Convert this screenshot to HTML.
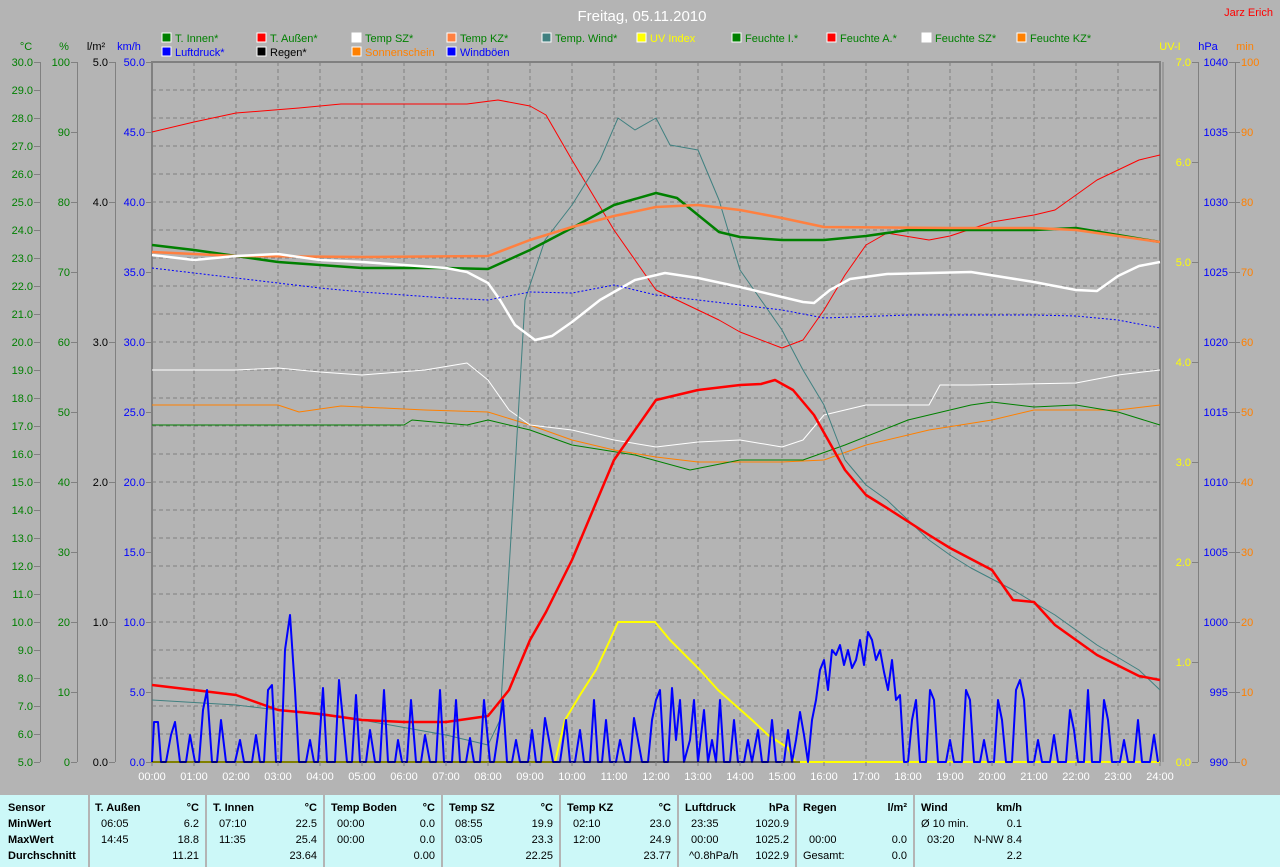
<!DOCTYPE html>
<html><head><meta charset="utf-8"><style>
body{margin:0;width:1280px;height:867px;overflow:hidden;background:#b4b4b4;font-family:"Liberation Sans",sans-serif}
svg text{font-family:"Liberation Sans",sans-serif;font-size:11px}
#tbl{position:absolute;left:0;top:795px;width:1280px;height:72px;background:#ccf8f8;font-size:11px}
.c{position:absolute;top:0;height:72px;border-left:2px solid #b4b4b4}
.r{position:absolute;white-space:nowrap}
.b{font-weight:bold}
</style></head><body>
<svg width="1280" height="795" style="position:absolute;left:0;top:0">
<text x="642" y="21" fill="#fff" font-size="15" text-anchor="middle" style="font-size:15px">Freitag, 05.11.2010</text>
<text x="1273" y="16" fill="#f00" text-anchor="end">Jarz Erich</text>
<g id="leg">
<rect x="162" y="33" width="9" height="9" fill="#008000" stroke="#fff"/><text x="175" y="42" fill="#008000">T. Innen*</text>
<rect x="162" y="47" width="9" height="9" fill="#00f" stroke="#fff"/><text x="175" y="56" fill="#00f">Luftdruck*</text>
<rect x="257" y="33" width="9" height="9" fill="#f00" stroke="#fff"/><text x="270" y="42" fill="#008000">T. Außen*</text>
<rect x="257" y="47" width="9" height="9" fill="#000" stroke="#fff"/><text x="270" y="56" fill="#000">Regen*</text>
<rect x="352" y="33" width="9" height="9" fill="#fff" stroke="#fff"/><text x="365" y="42" fill="#008000">Temp SZ*</text>
<rect x="352" y="47" width="9" height="9" fill="#ff8000" stroke="#fff"/><text x="365" y="56" fill="#ff8000">Sonnenschein</text>
<rect x="447" y="33" width="9" height="9" fill="#ff8040" stroke="#fff"/><text x="460" y="42" fill="#008000">Temp KZ*</text>
<rect x="447" y="47" width="9" height="9" fill="#00f" stroke="#fff"/><text x="460" y="56" fill="#00f">Windböen</text>
<rect x="542" y="33" width="9" height="9" fill="#408080" stroke="#fff"/><text x="555" y="42" fill="#008000">Temp. Wind*</text>
<rect x="637" y="33" width="9" height="9" fill="#ff0" stroke="#fff"/><text x="650" y="42" fill="#ff0">UV Index</text>
<rect x="732" y="33" width="9" height="9" fill="#008000" stroke="#fff"/><text x="745" y="42" fill="#008000">Feuchte I.*</text>
<rect x="827" y="33" width="9" height="9" fill="#f00" stroke="#fff"/><text x="840" y="42" fill="#008000">Feuchte A.*</text>
<rect x="922" y="33" width="9" height="9" fill="#fff" stroke="#fff"/><text x="935" y="42" fill="#008000">Feuchte SZ*</text>
<rect x="1017" y="33" width="9" height="9" fill="#ff8000" stroke="#fff"/><text x="1030" y="42" fill="#008000">Feuchte KZ*</text>
</g>
<!-- axis headers -->
<text x="26" y="50" fill="#008000" text-anchor="middle">°C</text>
<text x="64" y="50" fill="#008000" text-anchor="middle">%</text>
<text x="96" y="50" fill="#000" text-anchor="middle">l/m²</text>
<text x="129" y="50" fill="#00f" text-anchor="middle">km/h</text>
<text x="1170" y="50" fill="#ff0" text-anchor="middle">UV-I</text>
<text x="1208" y="50" fill="#00f" text-anchor="middle">hPa</text>
<text x="1245" y="50" fill="#ff8000" text-anchor="middle">min</text>
<g stroke="#808080" stroke-width="1">
<line x1="40.5" y1="62" x2="40.5" y2="762"/><line x1="77.5" y1="62" x2="77.5" y2="762"/><line x1="115.5" y1="62" x2="115.5" y2="762"/>
<line x1="1198.5" y1="62" x2="1198.5" y2="762"/><line x1="1235.5" y1="62" x2="1235.5" y2="762"/>
</g>
<g id="grid" stroke="#808080" stroke-dasharray="4,3">
<path id="gp" d=""/>
</g>
<g id="ax"></g>
<g stroke="#808080" stroke-width="2" fill="none">
<path d="M152 762V62H1160V762"/>
<line x1="1163" y1="62" x2="1163" y2="762" stroke-width="1"/>
</g>
<g fill="none" stroke-linejoin="round">
<!-- feuchte KZ thin orange -->
<polyline stroke="#ff8000" stroke-width="1" points="152,405 278,405 299,412 341,406 425,410 488,412 530,425 572,440 614,450 656,457 698,462 782,462 824,460 866,445 929,430 992,420 1034,410 1118,410 1160,405"/>
<!-- feuchte I thin green -->
<polyline stroke="#008000" stroke-width="1" points="152,425 404,425 412,420 467,425 488,420 530,430 572,445 635,455 690,470 740,460 803,460 845,445 908,420 929,415 971,405 992,402 1034,407 1076,405 1118,412 1160,425"/>
<!-- feuchte SZ thin white -->
<polyline stroke="#fff" stroke-width="1" points="152,370 236,370 278,368 320,372 362,375 425,370 467,363 488,380 509,410 530,425 572,430 614,440 656,447 698,442 740,440 782,447 803,440 824,415 866,405 929,405 940,385 971,385 1076,383 1118,375 1160,370"/>
<!-- feuchte A thin red -->
<polyline stroke="#f00" stroke-width="1" points="152,132 194,122 236,113 299,108 341,104 467,104 498,100 530,106 546,115 572,160 614,230 656,290 698,310 719,320 740,332 782,348 803,340 824,310 845,275 866,245 887,233 929,240 950,236 992,222 1034,215 1055,210 1076,195 1097,180 1139,160 1160,155"/>
<!-- temp wind teal -->
<polyline stroke="#408080" stroke-width="1" points="152,700 236,705 278,710 362,720 446,735 488,745 500,720 512,520 525,300 545,240 572,205 600,160 618,118 635,130 656,118 670,145 698,150 719,200 740,270 761,300 782,330 803,370 824,405 845,460 866,485 887,500 929,540 950,555 971,568 1013,590 1055,615 1097,645 1139,670 1160,690"/>
<!-- T innen thick green -->
<polyline stroke="#008000" stroke-width="2.5" points="152,245 194,250 236,256 278,262 320,265 362,268 446,268 488,269 530,250 572,228 614,205 656,193 677,198 698,215 719,232 740,237 782,240 824,240 866,236 908,230 950,230 1034,230 1076,228 1118,235 1160,242"/>
<!-- temp KZ thick orange -->
<polyline stroke="#ff8040" stroke-width="2.5" points="152,252 236,256 362,257 488,256 530,240 572,227 614,216 656,207 698,205 740,210 782,218 824,227 950,228 1034,228 1076,230 1118,236 1160,242"/>
<!-- temp SZ thick white -->
<polyline stroke="#fff" stroke-width="2.5" points="152,255 194,260 236,256 278,254 320,260 362,262 404,265 446,268 467,272 488,283 500,300 515,325 535,340 552,336 572,322 600,300 635,280 665,273 698,278 740,287 782,297 803,302 814,303 830,290 850,279 887,274 971,272 1034,282 1076,290 1097,291 1118,276 1139,266 1160,262"/>
<!-- luftdruck dotted blue -->
<polyline stroke="#00f" stroke-width="1" stroke-dasharray="2,2" points="152,268 236,278 320,288 362,292 446,298 488,300 530,292 572,293 614,285 656,295 698,300 782,310 824,318 908,315 1034,315 1076,316 1118,320 1160,328"/>
<!-- UV yellow -->
<polyline stroke="#ff0" stroke-width="2" points="152,762 555,762 565,720 580,695 596,670 610,640 618,622 655,622 670,640 690,660 700,670 718,690 735,705 752,720 768,735 788,748 795,762 1160,762"/>
<!-- T aussen thick red -->
<polyline stroke="#f00" stroke-width="2.5" points="152,685 194,690 236,695 278,710 320,714 362,720 404,722 446,722 488,716 509,690 530,640 546,612 572,560 614,460 656,400 698,390 740,385 761,384 775,380 793,390 814,415 845,470 866,495 887,508 929,535 950,548 992,570 1013,600 1034,602 1055,625 1076,640 1097,655 1139,676 1160,680"/>
<!-- wind gusts blue -->
<polyline stroke="#00f" stroke-width="2" points="152,762 154,722 158,722 161,762 166,762 171,735 175,722 180,762 186,762 190,735 195,762 199,762 203,710 207,690 212,762 217,762 221,720 226,762 235,762 240,740 244,762 252,762 256,735 260,762 264,762 268,690 272,685 276,762 281,762 285,650 290,615 295,690 299,762 306,762 310,740 314,762 318,762 323,688 327,762 335,762 339,680 343,720 347,762 352,762 356,695 360,762 366,762 370,730 375,762 380,762 384,690 388,762 395,762 398,740 402,762 407,762 411,700 416,762 421,762 425,735 430,762 436,762 440,690 444,762 452,762 456,700 460,762 466,762 470,738 474,762 480,762 484,700 490,762 494,762 498,735 503,700 507,762 512,762 516,740 520,762 528,762 532,730 536,762 541,762 545,718 549,740 553,762 560,762 566,720 570,762 575,762 580,730 584,762 590,762 594,700 598,762 602,762 606,720 610,762 616,762 620,740 625,762 630,762 634,718 638,740 642,762 648,762 652,720 656,700 660,690 664,762 668,762 672,688 676,740 680,700 684,762 690,740 694,700 698,762 704,710 708,762 712,740 716,762 720,700 724,762 730,762 734,720 738,762 744,762 748,740 752,762 758,730 762,762 768,762 772,720 776,762 784,762 788,730 792,762 796,740 800,712 804,735 808,762 812,720 816,700 820,670 824,660 828,690 832,650 836,655 840,645 844,665 848,650 852,668 856,660 860,640 864,665 868,632 872,640 876,660 880,650 884,672 888,690 892,660 896,700 900,695 904,762 908,762 912,720 916,700 920,762 926,762 930,690 934,700 938,762 946,762 950,740 954,762 962,762 966,690 970,700 974,762 980,762 984,740 988,762 994,762 998,700 1002,720 1006,762 1012,762 1016,690 1020,680 1024,700 1028,762 1034,762 1038,740 1042,762 1050,762 1054,735 1058,762 1066,762 1070,710 1074,730 1078,762 1084,762 1088,690 1092,762 1100,762 1104,700 1108,720 1112,762 1120,762 1124,740 1128,762 1134,762 1138,720 1142,762 1150,762 1154,735 1158,762"/>
<line x1="152" y1="762" x2="800" y2="762" stroke="#000" stroke-width="1"/>
</g>
<g id="xl"></g>
</svg>
<div id="tbl">
<div class="c" style="left:88px"></div><div class="c" style="left:205px"></div><div class="c" style="left:323px"></div><div class="c" style="left:441px"></div><div class="c" style="left:559px"></div><div class="c" style="left:677px"></div><div class="c" style="left:795px"></div><div class="c" style="left:913px"></div>
<div class="r b" style="left:8px;top:7px">Sensor</div><div class="r b" style="left:8px;top:23px">MinWert</div><div class="r b" style="left:8px;top:39px">MaxWert</div><div class="r b" style="left:8px;top:55px">Durchschnitt</div>
</div>
<script>
var N="http://www.w3.org/2000/svg";
function el(p,t,a,txt){var e=document.createElementNS(N,t);for(var k in a)e.setAttribute(k,a[k]);if(txt!=null)e.textContent=txt;p.appendChild(e);return e;}
var d="";for(var h=1;h<24;h++){var x=152+h*42;d+="M"+x+" 62V762";}
for(var i=1;i<25;i++){var y=62+i*28;d+="M152 "+y+"H1160";}
document.getElementById("gp").setAttribute("d",d);
var ax=document.getElementById("ax");
function tick(x,y,txt,col){el(ax,"line",{x1:x-6,y1:y+.5,x2:x,y2:y+.5,stroke:"#808080"});el(ax,"text",{x:x-7,y:y+4,fill:col,"text-anchor":"end"},txt);}
for(var i=0;i<=25;i++)tick(40,62+i*28,(30-i).toFixed(1),"#008000");
for(var i=0;i<=10;i++)tick(77,62+i*70,String(100-i*10),"#008000");
for(var i=0;i<=5;i++)tick(115,62+i*140,(5-i).toFixed(1),"#000");
for(var i=0;i<=10;i++)tick(152,62+i*70,(50-i*5).toFixed(1),"#00f");
for(var i=0;i<=7;i++)tick(1198,62+i*100,(7-i).toFixed(1),"#ff0");
for(var i=0;i<=10;i++)tick(1235,62+i*70,String(1040-i*5),"#00f");
for(var i=0;i<=10;i++)el(ax,"text",{x:1241,y:62+i*70+4,fill:"#ff8000"},String(100-i*10));
for(var i=0;i<=10;i++)el(ax,"line",{x1:1235,y1:62+i*70+.5,x2:1240,y2:62+i*70+.5,stroke:"#808080"});
var xl=document.getElementById("xl");
for(var h=0;h<=24;h++){var x=152+h*42;el(xl,"line",{x1:x,y1:762,x2:x,y2:766,stroke:"#808080"});el(xl,"text",{x:x,y:780,fill:"#fff","text-anchor":"middle"},(h<10?"0":"")+h+":00");}
var T=document.getElementById("tbl");
function c(x,y,txt,b,al){var e=document.createElement("div");e.className="r"+(b?" b":"");e.style.top=(y)+"px";if(al){e.style.right=(1280-x)+"px";}else e.style.left=x+"px";e.textContent=txt;T.appendChild(e);}
var cols=[[95,"T. Außen","°C",["06:05","6.2"],["14:45","18.8"],"11.21"],[213,"T. Innen","°C",["07:10","22.5"],["11:35","25.4"],"23.64"],[331,"Temp Boden","°C",["00:00","0.0"],["00:00","0.0"],"0.00"],[449,"Temp SZ","°C",["08:55","19.9"],["03:05","23.3"],"22.25"],[567,"Temp KZ","°C",["02:10","23.0"],["12:00","24.9"],"23.77"],[685,"Luftdruck","hPa",["23:35","1020.9"],["00:00","1025.2"],"1022.9"]];
cols.forEach(function(k){var x=k[0],r=x+104;c(x,7,k[1],1);c(r,7,k[2],1,1);c(x+6,23,k[3][0]);c(r,23,k[3][1],0,1);c(x+6,39,k[4][0]);c(r,39,k[4][1],0,1);c(r,55,k[5],0,1);});
c(689,55,"^0.8hPa/h");
c(803,7,"Regen",1);c(907,7,"l/m²",1,1);c(809,39,"00:00");c(907,39,"0.0",0,1);c(803,55,"Gesamt:");c(907,55,"0.0",0,1);
c(921,7,"Wind",1);c(1022,7,"km/h",1,1);c(921,23,"Ø 10 min.");c(1022,23,"0.1",0,1);c(927,39,"03:20");c(1022,39,"N-NW 8.4",0,1);c(1022,55,"2.2",0,1);
</script>
</body></html>
